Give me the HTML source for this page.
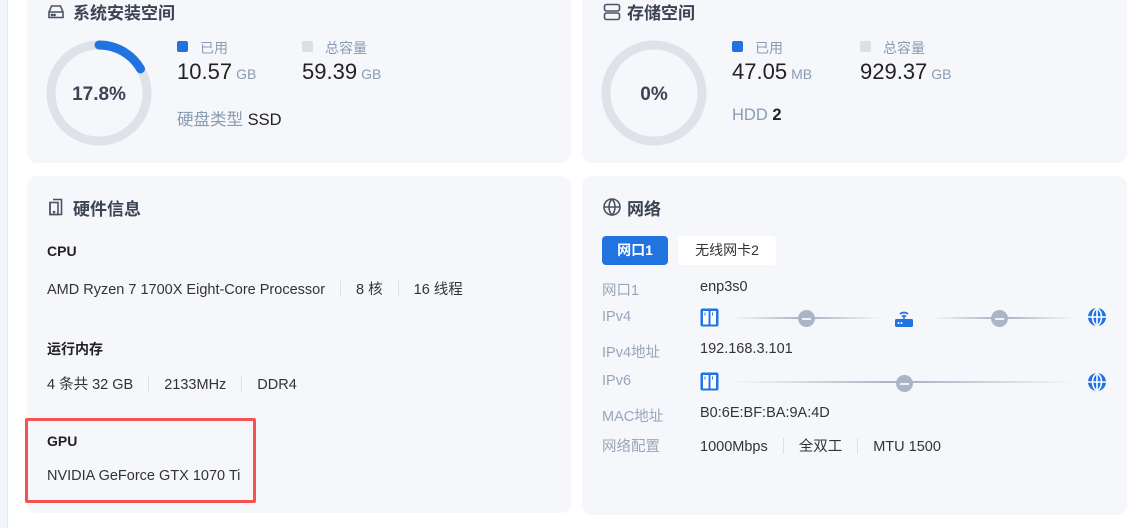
<!DOCTYPE html>
<html><head><meta charset="utf-8"><style>
*{margin:0;padding:0;box-sizing:border-box}
body{width:1148px;height:528px;background:#fff;position:relative;overflow:hidden;font-family:"Liberation Sans","Noto Sans CJK SC",sans-serif;color:#222}
.strip{position:absolute;left:0;top:0;width:8px;height:528px;background:#f1f4f9;border-right:1px solid #e6eaf0}
.card{position:absolute;background:#f5f7fb;border-radius:10px}
.a{position:absolute;white-space:nowrap}
.t{font-size:17px;font-weight:bold;color:#3c4454}
.lg{font-size:14px;color:#8a9bb4}
.sq{position:absolute;width:11px;height:11px;border-radius:2px}
.v{font-size:22px;color:#222}
.v small{font-size:14px;color:#8a9bb4;margin-left:4px}
.b{font-size:14px;font-weight:bold;color:#222}
.r{font-size:14.5px;color:#333}
.sep{display:inline-block;width:1px;height:16px;background:#dde2ea;vertical-align:-3px;margin:0 15px}
.lb{font-size:14.5px;color:#9aa5b8}
.line{position:absolute;height:2px;background:linear-gradient(90deg,rgba(160,170,190,0),#a7b0c0 50%,rgba(160,170,190,0))}
.dot{position:absolute;width:17px;height:17px;border-radius:50%;background:#aab6c8}
.dot:after{content:"";position:absolute;left:4px;top:7.5px;width:9px;height:2px;background:#eef1f6}
</style></head><body>
<div class="strip"></div>
<div class="card" style="left:27px;top:-20px;width:544px;height:183px"></div>
<div class="card" style="left:582px;top:-20px;width:545px;height:183px"></div>
<div class="card" style="left:27px;top:176px;width:544px;height:337px"></div>
<div class="card" style="left:582px;top:176px;width:545px;height:339px"></div>

<!-- card1 -->
<svg class="a" style="left:46px;top:2px" width="20" height="20" viewBox="0 0 20 20" fill="none" stroke="#4a5263" stroke-width="1.6"><path d="M3 10 L5.5 4 H14.5 L17 10 V15.5 H3 Z M3 10 H17"/><circle cx="6" cy="13" r=".6" fill="#4a5263"/><circle cx="8.5" cy="13" r=".6" fill="#4a5263"/></svg>
<div class="a t" style="left:73px;top:-1px">系统安装空间</div>
<svg class="a" style="left:46px;top:40px" width="106" height="106"><circle cx="53" cy="53" r="48" fill="none" stroke="#dfe3e9" stroke-width="9"/><circle cx="53" cy="53" r="48" fill="none" stroke="#2174e0" stroke-width="9" stroke-linecap="round" stroke-dasharray="50 400" transform="rotate(-90 53 53)"/><text x="53" y="60" text-anchor="middle" font-size="19" font-weight="bold" fill="#3c4454" font-family="Liberation Sans">17.8%</text></svg>
<div class="sq" style="left:177px;top:41px;background:#2174e0"></div>
<div class="a lg" style="left:200px;top:38px">已用</div>
<div class="sq" style="left:302px;top:41px;background:#dcdfe5"></div>
<div class="a lg" style="left:325px;top:38px">总容量</div>
<div class="a v" style="left:177px;top:59px">10.57<small>GB</small></div>
<div class="a v" style="left:302px;top:59px">59.39<small>GB</small></div>
<div class="a" style="left:177px;top:106px;font-size:16.5px;color:#8a9bb4">硬盘类型 <span style="color:#222">SSD</span></div>

<!-- card2 -->
<svg class="a" style="left:602px;top:2px" width="20" height="20" viewBox="0 0 20 20" fill="none" stroke="#4a5263" stroke-width="1.6"><rect x="2.5" y="2.5" width="15" height="6.5" rx="2"/><rect x="2.5" y="11" width="15" height="6.5" rx="2"/></svg>
<div class="a t" style="left:627px;top:-1px">存储空间</div>
<svg class="a" style="left:601px;top:40px" width="106" height="106"><circle cx="53" cy="53" r="48" fill="none" stroke="#dfe3e9" stroke-width="9"/><text x="53" y="60" text-anchor="middle" font-size="19" font-weight="bold" fill="#3c4454" font-family="Liberation Sans">0%</text></svg>
<div class="sq" style="left:732px;top:41px;background:#2174e0"></div>
<div class="a lg" style="left:755px;top:38px">已用</div>
<div class="sq" style="left:860px;top:41px;background:#dcdfe5"></div>
<div class="a lg" style="left:883px;top:38px">总容量</div>
<div class="a v" style="left:732px;top:59px">47.05<small>MB</small></div>
<div class="a v" style="left:860px;top:59px">929.37<small>GB</small></div>
<div class="a" style="left:732px;top:106px;font-size:16.5px;color:#8a9bb4">HDD <span style="color:#222;font-weight:bold">2</span></div>

<!-- card3 -->
<svg class="a" style="left:46px;top:197px" width="20" height="20" viewBox="0 0 20 20" fill="none" stroke="#4a5263" stroke-width="1.6"><path d="M7 2.5 H15.5 V17.5 H4 V5.5"/><rect x="4" y="5.5" width="8" height="12"/><circle cx="8" cy="15" r=".5" fill="#4a5263"/></svg>
<div class="a t" style="left:73px;top:195px">硬件信息</div>
<div class="a b" style="left:47px;top:243px">CPU</div>
<div class="a r" style="left:47px;top:278px">AMD Ryzen 7 1700X Eight-Core Processor<span class="sep"></span>8 核<span class="sep"></span>16 线程</div>
<div class="a b" style="left:47px;top:339px">运行内存</div>
<div class="a r" style="left:47px;top:373px">4 条共 32 GB<span class="sep"></span>2133MHz<span class="sep"></span>DDR4</div>
<div class="a" style="left:25px;top:418px;width:231px;height:85px;border:3px solid #f55252;border-radius:2px"></div>
<div class="a b" style="left:47px;top:433px">GPU</div>
<div class="a r" style="left:47px;top:468px">NVIDIA GeForce GTX 1070 Ti</div>

<!-- card4 -->
<svg class="a" style="left:602px;top:197px" width="20" height="20" viewBox="0 0 20 20" fill="none" stroke="#4a5263" stroke-width="1.6"><circle cx="10" cy="10" r="8"/><path d="M2 10 H18 M10 2 C6 6 6 14 10 18 C14 14 14 6 10 2"/></svg>
<div class="a t" style="left:627px;top:195px">网络</div>
<div class="a" style="left:602px;top:236px;width:66px;height:29px;background:#2174e0;border-radius:4px;color:#fff;font-weight:bold;font-size:14px;text-align:center;line-height:29px">网口1</div>
<div class="a" style="left:678px;top:236px;width:98px;height:29px;background:#fff;border-radius:4px;color:#333;font-size:14px;text-align:center;line-height:29px">无线网卡2</div>
<div class="a lb" style="left:602px;top:279px">网口1</div><div class="a r" style="left:700px;top:279px">enp3s0</div>
<div class="a lb" style="left:602px;top:309px">IPv4</div>
<div class="a lb" style="left:602px;top:341px">IPv4地址</div><div class="a r" style="left:700px;top:341px">192.168.3.101</div>
<div class="a lb" style="left:602px;top:373px">IPv6</div>
<div class="a lb" style="left:602px;top:405px">MAC地址</div><div class="a r" style="left:700px;top:405px">B0:6E:BF:BA:9A:4D</div>
<div class="a lb" style="left:602px;top:435px">网络配置</div><div class="a r" style="left:700px;top:435px">1000Mbps<span class="sep"></span>全双工<span class="sep"></span>MTU 1500</div>

<!-- ipv4 topology -->
<svg class="a" style="left:700px;top:308px" width="19" height="19" viewBox="0 0 19 19"><rect x="0.5" y="0.5" width="18" height="18" rx="2" fill="#2174e0"/><rect x="3" y="3" width="5.5" height="13.5" fill="#fff"/><rect x="10.5" y="3" width="5.5" height="13.5" fill="#fff"/><rect x="4.5" y="4.5" width="1" height="3" fill="#2174e0"/><rect x="12" y="4.5" width="1" height="3" fill="#2174e0"/></svg>
<div class="line" style="left:731px;top:317px;width:150px"></div>
<div class="dot" style="left:798px;top:310px"></div>
<svg class="a" style="left:894px;top:307px" width="20" height="20" viewBox="0 0 20 20"><rect x="1" y="12" width="18" height="8" rx="1.5" fill="#2174e0"/><circle cx="4.5" cy="16" r="1" fill="#fff"/><circle cx="7.5" cy="16" r="1" fill="#fff"/><path d="M6 7 A6 6 0 0 1 14 7 M8 9.5 A3 3 0 0 1 12 9.5" stroke="#2174e0" stroke-width="1.8" fill="none"/><rect x="9.2" y="9" width="1.6" height="3" fill="#2174e0"/></svg>
<div class="line" style="left:930px;top:317px;width:145px"></div>
<div class="dot" style="left:991px;top:310px"></div>
<svg class="a" style="left:1087px;top:307px" width="20" height="20" viewBox="0 0 20 20"><circle cx="10" cy="10" r="9" fill="#2174e0"/><path d="M1 10 H19 M10 1 V19 M10 1 C4 5 4 15 10 19 M10 1 C16 5 16 15 10 19" stroke="#fff" stroke-width="1.6" fill="none"/></svg>
<!-- ipv6 -->
<svg class="a" style="left:700px;top:372px" width="19" height="19" viewBox="0 0 19 19"><rect x="0.5" y="0.5" width="18" height="18" rx="2" fill="#2174e0"/><rect x="3" y="3" width="5.5" height="13.5" fill="#fff"/><rect x="10.5" y="3" width="5.5" height="13.5" fill="#fff"/><rect x="4.5" y="4.5" width="1" height="3" fill="#2174e0"/><rect x="12" y="4.5" width="1" height="3" fill="#2174e0"/></svg>
<div class="line" style="left:731px;top:381px;width:345px"></div>
<div class="dot" style="left:896px;top:375px"></div>
<svg class="a" style="left:1087px;top:372px" width="20" height="20" viewBox="0 0 20 20"><circle cx="10" cy="10" r="9" fill="#2174e0"/><path d="M1 10 H19 M10 1 V19 M10 1 C4 5 4 15 10 19 M10 1 C16 5 16 15 10 19" stroke="#fff" stroke-width="1.6" fill="none"/></svg>
</body></html>
